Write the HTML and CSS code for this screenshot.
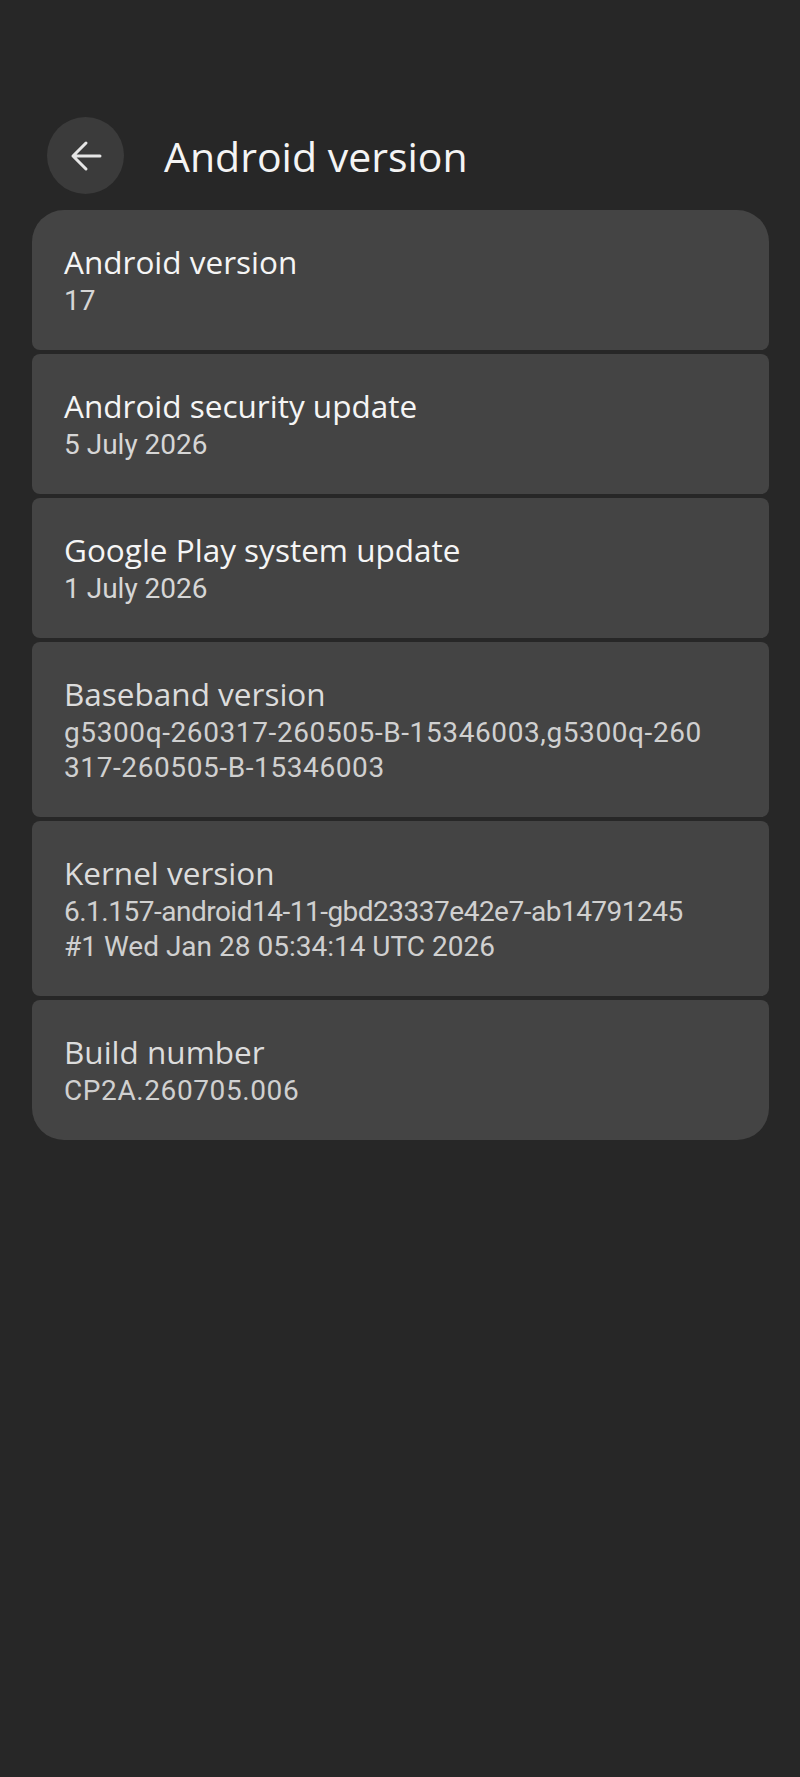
FILE: index.html
```html
<!DOCTYPE html>
<html>
<head>
<meta charset="utf-8">
<link rel="stylesheet" href="styles.css">
</head>
<body>
<div class="screen">
  <header class="topbar">
    <div class="back">
      <svg width="32" height="32" viewBox="0 0 32 32"><path d="M30 16H3M16 3L3 16l13 13" fill="none" stroke="#e6e6e6" stroke-width="3" stroke-linecap="round" stroke-linejoin="round"/></svg>
    </div>
    <h1 class="title">Android version</h1>
  </header>
  <div class="list">
    <div class="item first">
      <div class="item-title">Android version</div>
      <div class="item-sum">17</div>
    </div>
    <div class="item">
      <div class="item-title">Android security update</div>
      <div class="item-sum">5 July 2026</div>
    </div>
    <div class="item">
      <div class="item-title">Google Play system update</div>
      <div class="item-sum">1 July 2026</div>
    </div>
    <div class="item muted">
      <div class="item-title">Baseband version</div>
      <div class="item-sum sum-digits">g5300q-260317-260505-B-15346003,g5300q-260<br>317-260505-B-15346003</div>
    </div>
    <div class="item muted">
      <div class="item-title">Kernel version</div>
      <div class="item-sum"><span class="sum-tight">6.1.157-android14-11-gbd23337e42e7-ab14791245</span><br>#1 Wed Jan 28 05:34:14 UTC 2026</div>
    </div>
    <div class="item muted last">
      <div class="item-title">Build number</div>
      <div class="item-sum sum-digits">CP2A.260705.006</div>
    </div>
  </div>
</div>
</body>
</html>
```
FILE: styles.css
```css
html, body {
  margin: 0;
  padding: 0;
  background: #272727;
}
body {
  font-family: "Open Sans", Roboto, "Liberation Sans", sans-serif;
  width: 800px;
  height: 1777px;
  overflow: hidden;
}
.screen {
  padding-top: 117px;
}
.topbar {
  display: flex;
  align-items: center;
  height: 77px;
  padding-left: 47px;
}
.back {
  width: 77px;
  height: 77px;
  border-radius: 50%;
  background: #3b3b3b;
  display: flex;
  align-items: center;
  justify-content: center;
}
.title {
  margin: 0 0 0 40px;
  font-size: 41px;
  line-height: 50px;
  font-weight: 400;
  color: #f4f4f4;
}
.list {
  margin-top: 16px;
  padding: 0 31px 0 32px;
  display: flex;
  flex-direction: column;
  gap: 4px;
}
.item {
  background: #444444;
  border-radius: 8px;
  padding: 33px 32px 32px;
}
.item.first {
  border-top-left-radius: 32px;
  border-top-right-radius: 32px;
}
.item.last {
  border-bottom-left-radius: 32px;
  border-bottom-right-radius: 32px;
}
.item-title {
  font-size: 31.5px;
  line-height: 38px;
  margin-bottom: 2px;
  color: #f5f5f5;
}
.item-sum {
  font-family: Roboto, "Open Sans", sans-serif;
  font-size: 28px;
  line-height: 35px;
  white-space: nowrap;
  color: #d6d6d6;
}
.sum-digits {
  letter-spacing: 0.6px;
}
.sum-tight {
  letter-spacing: -0.5px;
}
.item.muted .item-title {
  color: #dcdcdc;
}
.item.muted .item-sum {
  color: #d0d0d0;
}
```
